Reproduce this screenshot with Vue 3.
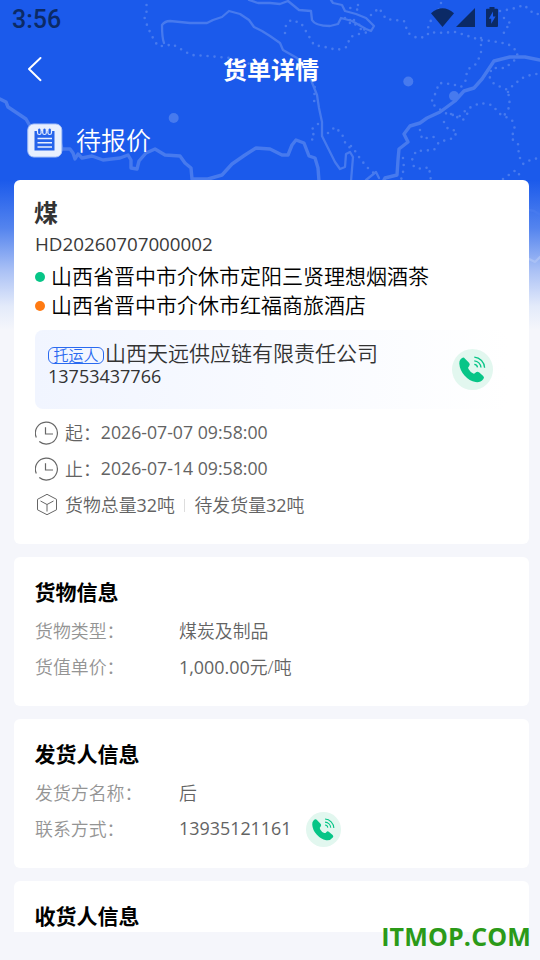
<script setup>
const stops = [
  { name: '山西省晋中市介休市定阳三贤理想烟酒茶', kind: 'from' },
  { name: '山西省晋中市介休市红福商旅酒店', kind: 'to' },
]
const times = [
  { label: '起：', value: '2026-07-07 09:58:00' },
  { label: '止：', value: '2026-07-14 09:58:00' },
]
const sections = [
  {
    title: '货物信息',
    rows: [
      { label: '货物类型：', value: '煤炭及制品' },
      { label: '货值单价：', amount: '1,000.00', value: '元/吨' },
    ],
  },
  {
    title: '发货人信息',
    rows: [
      { label: '发货方名称：', value: '后' },
      { label: '联系方式：', amount: '13935121161', call: true },
    ],
  },
  { title: '收货人信息', rows: [] },
]
const rivers = [
  'M0 99L6 102L8 107L17 113L26 119L30 126L45 140L60 142L62 149L70 149L73 153L75 159L78 154L82 158L92 156L103 160L120 158L128 155L131 160L131 168L137 169L139 161L146 153L155 149L165 155L180 156L185 163L191 168L192 179L208 179L222 175L232 164L245 155L256 148L270 149L282 155L288 155L292 145L296 140L304 143L309 156L315 158L318 168L319 181',
  'M540 60L525 57L510 57L494 61L488 70L482 79L474 88L464 91L455 101L440 112L427 118L420 123L410 126L404 134L408 142L399 149L398 160L397 175L385 178L382 184',
]
const borders = [
  'M164 43Q162 38 162 25Q165 21 170 21L190 23L207 23L213 20L222 17L229 11L240 14L249 20L254 27L262 31L270 36L280 43L283 50L297 58L306 70L311 80L317 95L319 108L322 122L322 136L328 148L335 162L340 169L345 167L346 154L350 152L353 157L351 181',
  'M249 0L258 3L270 3L280 4L288 1L299 10L311 11L312 20Q315 26 330 26L338 24L341 18L352 21L366 29L371 31L374 26L366 18L356 14L345 11L342 5L333 3L331 0',
  'M366 180L376 172L379 178',
  'M529 210L534 211L540 215',
]
const dots = [
  'M146 -2L147 11L144 16L148 28L154 40L158 46L166 46L172 44L184 51L191 55L208 56L230 58L250 64',
  'M285 33L286 25L291 20L301 23L307 33L314 45L325 47L337 50L347 47L350 37L362 33L371 32',
  'M358 5L359 10L350 8M345 18L353 26M350 20L362 30M354 20L366 31',
  'M371 15L379 8L386 19L404 21L408 33L417 38L425 37L430 32L438 33L455 32L465 35L480 40L492 41L508 44L518 52L516 59L505 68L492 68L489 76L494 84L508 90L510 106L502 119',
  'M481 38L481 54L476 64L467 70L466 80L461 87L452 84L439 83L436 92L431 103L438 108L447 114L460 116L467 109L480 103L492 105L500 114L512 120L515 129L511 138L518 144L519 156L523 164L532 159L542 158',
  'M508 92L513 85L524 77L534 74L542 74',
  'M444 122L448 129L457 131L454 138L439 142L434 150L416 151L412 160L414 167L422 169L429 167L431 181',
  'M420 130L422 139L432 137L440 137',
  'M451 114L463 120L469 111',
  'M328 133L335 127L342 134L346 145L355 151L361 160L368 168L378 177',
  'M315 80L314 106M318 124L311 130L315 137L307 144',
  'M441 3L438 12L429 23L427 34',
  'M500 11L512 9L524 5L534 14L542 14',
  'M504 18L511 24L505 29L503 36',
  'M503 179L516 170L521 177M403 158L404 168L401 180M351 146L353 152',
]
</script>

<template>
  <div class="page" lang="zh-CN">
    <svg class="map" viewBox="0 0 540 330" fill="none" stroke-linejoin="round" stroke-linecap="round">
      <path v-for="d in rivers" :key="d" :d="d" stroke="#477aee" stroke-width="3.4" />
      <path v-for="d in borders" :key="d" :d="d" stroke="#477aee" stroke-width="2.3" />
      <path d="M529 259L535 262L540 257" stroke="#a9c0f5" stroke-width="2.300" />
      <path v-for="d in dots" :key="d" :d="d" stroke="#477aee" stroke-width="2.6" stroke-dasharray="0 7" />
      <g fill="#477aee">
        <circle cx="173.700" cy="118" r="5" />
        <circle cx="408.300" cy="81.500" r="5" />
        <circle cx="454" cy="96" r="5" />
      </g>
    </svg>

    <header class="top">
      <div class="statusbar">
        <span class="clock">3:56</span>
        <svg class="sysicons" width="70" height="22" viewBox="0 0 70 22" fill="#0b2a66">
          <path d="M3 6.200Q14.500-3.800 26 6.200L14.500 20Z" />
          <path d="M47 1V20H28Z" />
          <path fill-rule="evenodd" d="M61.500 0h5v1.800h2.500q1 0 1 1V19q0 1-1 1H59q-1 0-1-1V2.800q0-1 1-1h2.500zM65 4.500L60.800 11.800h2.400v5L67.600 9.500h-2.600z" />
        </svg>
      </div>
      <div class="navbar">
        <svg class="back" width="16" height="26" viewBox="0 0 16 26" fill="none" stroke="#fff" stroke-width="1.900" stroke-linecap="round" stroke-linejoin="round">
          <path d="M13.500 1L2 12L13.500 23.200" />
        </svg>
        <h1 class="title">货单详情</h1>
      </div>
      <div class="state">
        <svg width="36" height="36" viewBox="0 0 36 36">
          <rect x="0.800" y="1" width="34" height="33" rx="6" fill="#e8effe" stroke="#a9c2f8" stroke-width="1" />
          <path d="M7.500 8H27.500V27.500H7.500Z" fill="#2563eb" />
          <g fill="#2563eb" stroke="#e8effe" stroke-width="1.200">
            <rect x="10.500" y="5" width="3.600" height="6.500" rx="1.800" />
            <rect x="15.700" y="5" width="3.600" height="6.500" rx="1.800" />
            <rect x="20.900" y="5" width="3.600" height="6.500" rx="1.800" />
          </g>
          <path d="M10.500 15.500H25M10.500 19.800H25M10.500 24H25" stroke="#e8effe" stroke-width="1.600" />
        </svg>
        <span>待报价</span>
      </div>
    </header>

    <main class="content">
      <section class="card order">
        <h2 class="goods">煤</h2>
        <div class="number">HD20260707000002</div>
        <div v-for="s in stops" :key="s.name" class="stop">
          <i class="dot" :class="s.kind"></i><span>{{ s.name }}</span>
        </div>
        <div class="shipper">
          <div>
            <div class="company"><span class="tag">托运人</span>山西天远供应链有限责任公司</div>
            <div class="tel">13753437766</div>
          </div>
          <svg class="call" viewBox="0 0 41 41">
            <circle cx="20.500" cy="20.500" r="20.500" fill="#e2f7ef" />
            <path fill="#07c587" d="M8.600 10.200Q11.300 7.400 12.800 9.400L17 13.800Q18.500 15.400 17.200 17Q15.400 18.600 16.500 20.100Q18.500 23.600 21.300 24.600Q22.600 25.100 24 23.300Q25.300 22 27 23.300L31.200 27Q32.700 28.400 31.400 29.900Q28.300 33.800 23.600 33Q17.400 32 12.500 26.500Q7.700 21 7.300 14.500Q7.200 11.700 8.600 10.200Z" />
            <g fill="none" stroke="#07c587" stroke-width="1.300">
              <path d="M22.300 8.200A11 11 0 0 1 32.600 18.800" />
              <path d="M22.300 11.800A7.200 7.200 0 0 1 29 18.500" />
              <path d="M22.300 15.300A3.500 3.500 0 0 1 25.500 18.300" />
            </g>
          </svg>
        </div>
        <div v-for="t in times" :key="t.label" class="meta">
          <svg width="24" height="24" viewBox="0 0 24 24" fill="none" stroke="#666" stroke-width="1.200">
            <path d="M1.300 16.500A11 11 0 1 1 4.300 20.500" />
            <path d="M10.500 6.300V13H18" />
          </svg>
          <span>{{ t.label }}</span><span class="time">{{ t.value }}</span>
        </div>
        <div class="meta">
          <svg width="24" height="24" viewBox="0 0 24 24" fill="none" stroke="#666" stroke-width="1" stroke-linejoin="round">
            <path d="M12 1.300L21.500 6.300V16.800L12 21.700L2.500 16.800V6.300Z" />
            <path d="M5.500 8L12 11.500L18.500 8M12 11.500V18.500" />
          </svg>
          <span>货物总量<b>32</b>吨</span><i class="bar"></i><span>待发货量<b>32</b>吨</span>
        </div>
      </section>

      <section v-for="s in sections" :key="s.title" class="card info">
        <h3>{{ s.title }}</h3>
        <div v-for="r in s.rows" :key="r.label" class="row">
          <span class="label">{{ r.label }}</span>
          <span class="value"><b v-if="r.amount">{{ r.amount }}</b>{{ r.value }}</span>
          <svg v-if="r.call" class="call small" viewBox="0 0 41 41">
            <circle cx="20.500" cy="20.500" r="20.500" fill="#e2f7ef" />
            <path fill="#07c587" d="M8.600 10.200Q11.300 7.400 12.800 9.400L17 13.800Q18.500 15.400 17.200 17Q15.400 18.600 16.500 20.100Q18.500 23.600 21.300 24.600Q22.600 25.100 24 23.300Q25.300 22 27 23.300L31.200 27Q32.700 28.400 31.400 29.900Q28.300 33.800 23.600 33Q17.400 32 12.500 26.500Q7.700 21 7.300 14.500Q7.200 11.700 8.600 10.200Z" />
            <g fill="none" stroke="#07c587" stroke-width="1.300">
              <path d="M22.300 8.200A11 11 0 0 1 32.600 18.800" />
              <path d="M22.300 11.800A7.200 7.200 0 0 1 29 18.500" />
              <path d="M22.300 15.300A3.500 3.500 0 0 1 25.500 18.300" />
            </g>
          </svg>
        </div>
      </section>
    </main>

    <div class="watermark">ITMOP.COM</div>
  </div>
</template>

<style>
body { margin: 0; background: #f5f6fb; }
</style>

<style scoped>
.page {
  position: relative;
  width: 540px;
  height: 960px;
  overflow: hidden;
  display: flex;
  flex-direction: column;
  font-family: "Open Sans", "Noto Sans CJK SC", sans-serif;
  font-weight: 350;
  background: linear-gradient(#1b5aeb 0, #1b5aeb 180px, #5484ee 228px, #a9c0f5 270px, #e3eafa 306px, #f5f6fb 330px);
}
h1, h2, h3 { margin: 0; }
b, .number, .tel, .time { font-weight: 400; }
.map {
  position: absolute;
  inset: 0 0 auto 0;
  width: 540px;
  height: 330px;
}
.top { position: relative; height: 180px; flex: none; color: #fff; }
.statusbar {
  display: flex;
  justify-content: space-between;
  align-items: center;
  height: 38px;
  padding: 0 42px 0 12px;
}
.clock { font: 500 25px/38px Roboto, sans-serif; color: #0b2a66; padding-top: 2px; }
.sysicons { margin-bottom: 2px; }
.navbar {
  display: grid;
  grid-template-columns: 28px 1fr 26px;
  align-items: center;
  height: 62px;
  padding-left: 26px;
  padding-right: 26px;
}
.back { margin-left: 1px; }
.title { font-size: 24px; line-height: 62px; text-align: center; font-weight: 700; padding-top: 1px; }
.state {
  display: flex;
  align-items: center;
  gap: 13px;
  height: 82px;
  padding-left: 27px;
  font-size: 25px;
}
.state span { padding-bottom: 4px; }
.content {
  position: relative;
  height: 752px;
  flex: none;
  overflow: hidden;
  padding: 0 11px 0 14px;
  display: flex;
  flex-direction: column;
  gap: 13px;
}
.card { background: #fff; border-radius: 6px; padding: 0 21px 21px; flex: none; }
.order { padding-top: 17px; }
.goods { font-size: 24px; line-height: 32px; color: #333; margin-left: -1px; }
.number { font-size: 18.800px; line-height: 31px; color: #3a3a3a; }
.stop {
  display: flex;
  align-items: center;
  gap: 6px;
  height: 29px;
  font-size: 21px;
  color: #000;
  white-space: nowrap;
}
.stop span { padding-bottom: 3px; }
.number + .stop { margin-top: 2px; }
.dot { width: 10px; height: 10px; border-radius: 50%; }
.from { background: #07c587; }
.to { background: #ff7a12; }
.shipper {
  display: flex;
  justify-content: space-between;
  align-items: center;
  height: 79px;
  margin: 10px 0 6px;
  padding: 0 15px 0 13px;
  border-radius: 8px;
  box-sizing: border-box;
  background: linear-gradient(90deg, #f1f5ff, #fff);
  color: #333;
}
.company { display: flex; align-items: center; gap: 1px; font-size: 21px; line-height: 25px; }
.tag {
  width: 54px;
  height: 15px;
  margin-top: 4px;
  border: 1px solid #2a6af0;
  border-radius: 6px;
  font-size: 15px;
  line-height: 14px;
  text-align: center;
  color: #2a6af0;
}
.tel { font-size: 18px; line-height: 21px; padding-bottom: 11px; }
.call { width: 41px; height: 41px; flex: none; }
.small { width: 35px; height: 35px; margin-left: 14px; }
.meta {
  display: flex;
  align-items: center;
  height: 36px;
  font-size: 17.900px;
  color: #636363;
}
.meta span { padding-bottom: 2px; }
.meta .time { font-size: 17.700px; }
.meta svg { margin-right: 6px; }
.bar { width: 1px; height: 13px; background: #ddd; margin: 0 9px 0 9.500px; }
.info { padding-top: 14px; }
.info h3 { font-size: 21px; line-height: 42px; color: #000; margin-left: -0.500px; }
.row { display: flex; align-items: center; height: 36px; font-size: 17.900px; }
.row span { padding-bottom: 3px; }
.label { width: 144px; color: #949494; }
.value { color: #636363; }
.watermark {
  position: absolute;
  right: 9px;
  bottom: 9px;
  font: 700 25px/30px "Open Sans", sans-serif;
  letter-spacing: .15px;
  color: #2b9a18;
}
</style>
